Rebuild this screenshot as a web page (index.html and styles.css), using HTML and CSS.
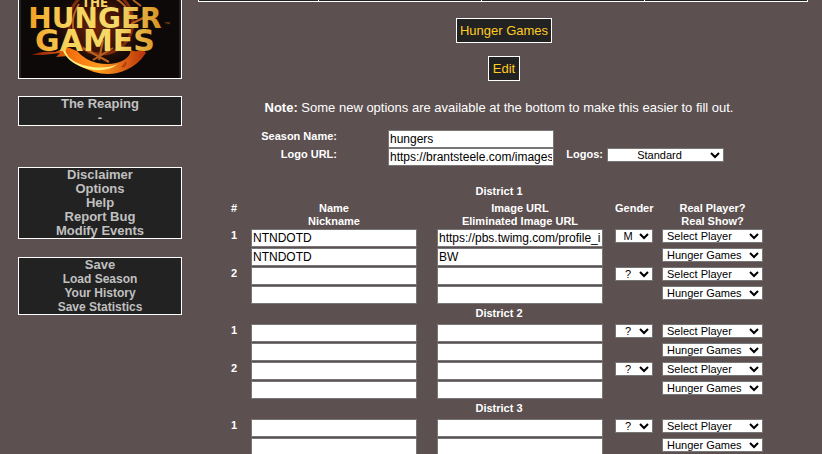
FILE: index.html
```html
<!DOCTYPE html>
<html lang="en">
<head>
<meta charset="utf-8">
<title>Hunger Games - Edit</title>
<link rel="stylesheet" href="styles.css">
</head>
<body>
<aside class="sidebar">
  <div class="panel logo">
    <svg viewBox="0 0 158 78" role="img" aria-label="The Hunger Games">
      <defs>
        <linearGradient id="gold" gradientUnits="userSpaceOnUse" x1="5" x2="144" y1="0" y2="0"><stop offset="0" stop-color="#f39a1f"/><stop offset=".3" stop-color="#f6d35c"/><stop offset=".65" stop-color="#f4da68"/><stop offset="1" stop-color="#d58a1c"/></linearGradient>
        <radialGradient id="glow"><stop offset="0" stop-color="#6a2408"/><stop offset=".6" stop-color="#351006"/><stop offset="1" stop-color="#0c0908" stop-opacity="0"/></radialGradient>
        <linearGradient id="fire" x1="0" x2="1"><stop offset="0" stop-color="#7a1604"/><stop offset=".35" stop-color="#f5700e"/><stop offset=".6" stop-color="#ff9a20"/><stop offset="1" stop-color="#b9300a"/></linearGradient>
        <filter id="soft"><feGaussianBlur stdDeviation="0.7"/></filter>
      </defs>
      <rect width="158" height="78" fill="#0c0908"/>
      <ellipse cx="78" cy="28" rx="52" ry="42" fill="url(#glow)"/>
      <g filter="url(#soft)" fill="none">
        <circle cx="80" cy="22" r="32" stroke="#7d2c0a" stroke-width="3"/>
        <path d="M88 -4q18 6 22 22M58 4q-9 14-5 28M62 48l26 14M72 60l20-12M78 60l4-20M112 0l8 6M110 24l16-8" stroke="#b86022" stroke-width="2"/>
        <path d="M10 55q12-5 24-3l12-5 10 4q8 9 20 12 16 3 27-3 8-6 6-10 8 3 12-2l4 5q-8 12-20 17-15 7-32 2-16-5-26-16l-12 1 4-4-17 2z" fill="url(#fire)"/>
        <path d="M44 50q4 12 22 16 18 4 31-2-12 9-30 5-19-5-25-18z" fill="#fff080"/>
        <path d="M101 67l4-5-1 4z" stroke="#b03208"/>
      </g>
      <g fill="url(#gold)" font-family="DejaVu Sans" font-weight="700" text-anchor="middle">
        <text x="74" y="7" font-size="12">THE</text>
        <text x="74" y="28" font-size="28">HUNGER</text>
        <text x="74" y="51" font-size="30">GAMES</text>
      </g>
      <text x="143" y="26" font-size="6" fill="#a65d18" font-family="Liberation Sans">™</text>
    </svg>
  </div>
  <nav class="panel reaping"><a href="#">The Reaping</a><a href="#">-</a></nav>
  <nav class="panel help"><a href="#">Disclaimer</a><a href="#">Options</a><a href="#">Help</a><a href="#">Report Bug</a><a href="#">Modify Events</a></nav>
  <nav class="panel saves"><a class="save" href="#">Save</a><a href="#">Load Season</a><a href="#">Your History</a><a href="#">Save Statistics</a></nav>
</aside>
<main>
  <div class="tabs"><span></span><span></span><span></span><span></span></div>
  <div class="titles"><h1>Hunger Games</h1><h2>Edit</h2></div>
  <form>
    <p class="note"><b>Note:</b> Some new options are available at the bottom to make this easier to fill out.</p>
    <div class="season">
      <label class="first" for="season">Season Name:</label><input id="season" type="text" value="hungers">
      <label class="first" for="logo">Logo URL:</label><input id="logo" type="text" value="https://brantsteele.com/images/logo.png">
      <label for="logos">Logos:</label><select class="logos" id="logos"><option>Standard</option></select>
    </div>
    <table>
      <colgroup><col class="c-num"><col class="c-name"><col class="c-image"><col class="c-gender"><col></colgroup>
      <tbody>
        <tr class="district"><th colspan="5">District 1</th></tr>
        <tr class="heads"><th>#</th><th>Name<br>Nickname</th><th>Image URL<br>Eliminated Image URL</th><th>Gender</th><th>Real Player?<br>Real Show?</th></tr>
        <tr><td>1</td><td><input type="text" aria-label="Name" value="NTNDOTD"></td><td><input type="text" aria-label="Image URL" value="https://pbs.twimg.com/profile_images/1.jpg"></td><td><select class="gender" aria-label="Gender"><option>M</option></select></td><td><select aria-label="Real Player"><option>Select Player</option></select></td></tr>
        <tr><td></td><td><input type="text" aria-label="Nickname" value="NTNDOTD"></td><td><input type="text" aria-label="Eliminated Image URL" value="BW"></td><td></td><td><select aria-label="Real Show"><option>Hunger Games</option></select></td></tr>
        <tr><td>2</td><td><input type="text" aria-label="Name"></td><td><input type="text" aria-label="Image URL"></td><td><select class="gender" aria-label="Gender"><option>?</option></select></td><td><select aria-label="Real Player"><option>Select Player</option></select></td></tr>
        <tr><td></td><td><input type="text" aria-label="Nickname"></td><td><input type="text" aria-label="Eliminated Image URL"></td><td></td><td><select aria-label="Real Show"><option>Hunger Games</option></select></td></tr>
      </tbody>
      <tbody>
        <tr class="district"><th colspan="5">District 2</th></tr>
        <tr><td>1</td><td><input type="text" aria-label="Name"></td><td><input type="text" aria-label="Image URL"></td><td><select class="gender" aria-label="Gender"><option>?</option></select></td><td><select aria-label="Real Player"><option>Select Player</option></select></td></tr>
        <tr><td></td><td><input type="text" aria-label="Nickname"></td><td><input type="text" aria-label="Eliminated Image URL"></td><td></td><td><select aria-label="Real Show"><option>Hunger Games</option></select></td></tr>
        <tr><td>2</td><td><input type="text" aria-label="Name"></td><td><input type="text" aria-label="Image URL"></td><td><select class="gender" aria-label="Gender"><option>?</option></select></td><td><select aria-label="Real Player"><option>Select Player</option></select></td></tr>
        <tr><td></td><td><input type="text" aria-label="Nickname"></td><td><input type="text" aria-label="Eliminated Image URL"></td><td></td><td><select aria-label="Real Show"><option>Hunger Games</option></select></td></tr>
      </tbody>
      <tbody>
        <tr class="district"><th colspan="5">District 3</th></tr>
        <tr><td>1</td><td><input type="text" aria-label="Name"></td><td><input type="text" aria-label="Image URL"></td><td><select class="gender" aria-label="Gender"><option>?</option></select></td><td><select aria-label="Real Player"><option>Select Player</option></select></td></tr>
        <tr><td></td><td><input type="text" aria-label="Nickname"></td><td><input type="text" aria-label="Eliminated Image URL"></td><td></td><td><select aria-label="Real Show"><option>Hunger Games</option></select></td></tr>
      </tbody>
    </table>
  </form>
</main>
</body>
</html>
```
FILE: styles.css
```css
* { box-sizing: border-box; }
html { height: 100%; overflow: hidden; }
body {
  margin: 0;
  padding: 0 14px 0 18px;
  display: grid;
  grid-template-columns: 164px minmax(0, 1fr);
  column-gap: 16px;
  background: #5c5050;
  color: #fff;
  font-family: "Liberation Sans", Arial, sans-serif;
  font-size: 11px;
}
.panel { border: 1px solid #fff; background: #222; text-align: center; }
.panel a {
  display: block;
  color: #c0c0c0;
  font-size: 12px;
  font-weight: bold;
  line-height: 14px;
  text-decoration: none;
}
.logo { border-top: 0; padding: 0 2px; }
.logo svg { display: block; width: 100%; }
.reaping { margin-top: 17px; }
.reaping a, .help a, .panel .save { font-size: 13px; }
.help { margin-top: 41px; }
.saves { margin-top: 18px; }
.tabs {
  display: grid;
  grid-template-columns: 119fr 163fr 163fr 163fr;
  height: 2px;
  background: #222;
  border: 1px solid #fff;
  border-top: 0;
}
.tabs span + span { border-left: 1px solid #fff; }
.titles {
  display: flex;
  flex-direction: column;
  align-items: center;
  gap: 13px;
  padding-top: 16px;
  padding-left: 2px;
}
h1, h2 {
  margin: 0;
  padding: 4px;
  border: 1px solid #fff;
  background: #222;
  color: #ffcc22;
  font-size: 13px;
  font-weight: normal;
  line-height: 15px;
}
h1 { padding: 4px 3px; }
form { max-width: 548px; margin: 0 auto; padding-right: 8px; }
.note { margin: 19px 0 14px; font-size: 13px; line-height: 16px; text-align: center; }
.season {
  display: grid;
  grid-template-columns: 159px 166px 53px 117px;
  font-weight: bold;
  line-height: 12px;
}
.season label { padding-right: 4px; text-align: right; }
.season .first { grid-column: 1; padding-right: 51px; }
input, select {
  display: block;
  width: 100%;
  margin: 0;
  border: 1px solid #767676;
  border-radius: 0;
  background: #fff;
  color: #000;
  font-family: inherit;
}
input { height: 18px; padding: 0 1px 1px; font-size: 12px; }
select {
  height: 14px;
  padding: 0 0 1px;
  border-width: 0 1px;
  box-shadow: inset 0 1px #767676, inset 0 -1px #767676;
  font-size: 11px;
}
.logos, .gender { text-align: center; text-align-last: center; }
table {
  width: 100%;
  margin-top: 17px;
  table-layout: fixed;
  border-collapse: collapse;
  font-weight: bold;
}
td, th { padding: 0; vertical-align: top; }
.c-num { width: 22px; }
.c-name { width: 186px; }
.c-image { width: 178px; }
.c-gender { width: 47px; }
.district th { height: 19px; line-height: 16px; }
.heads th { height: 27px; line-height: 13px; }
td { height: 19px; line-height: 12px; text-align: center; }
tr > :nth-child(1):not([colspan]) { padding-left: 2px; text-align: left; }
tr > :nth-child(2) { padding-right: 20px; }
tr > :nth-child(3) { padding-right: 12px; }
tr > :nth-child(4) { padding-right: 9px; }
tr > :nth-child(5) { padding-right: 6px; }
```
